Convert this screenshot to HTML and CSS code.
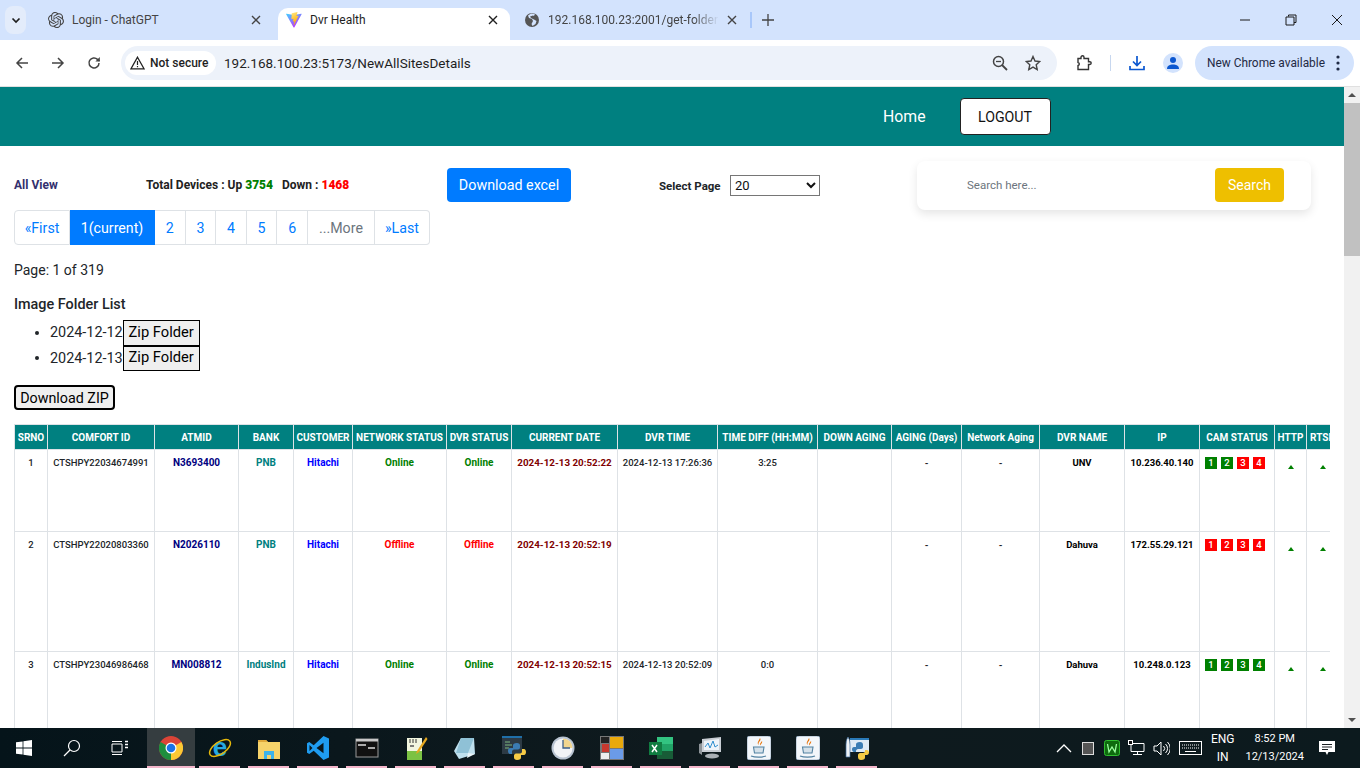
FILE: index.html
```html
<!DOCTYPE html>
<html lang="en">
<head>
    <meta charset="UTF-8">
    <title>Dvr Health</title>
    <link rel="stylesheet" href="styles.css">
</head>
<body>
    <!-- browser tabs -->
    <div class="tabstrip">
        <div class="tab-search"><svg width="12" height="12" viewBox="0 0 12 12"><path d="M2.5 4.5 6 8l3.500-3.500" fill="none" stroke="#1f1f1f" stroke-width="1.700"/></svg></div>
        <div class="tab tab-first">
            <svg class="favicon" viewBox="0 0 24 24"><path fill="#444" d="M22.2819 9.8211a5.9847 5.9847 0 0 0-.5157-4.9108 6.0462 6.0462 0 0 0-6.5098-2.9A6.0651 6.0651 0 0 0 4.9807 4.1818a5.9847 5.9847 0 0 0-3.9977 2.9 6.0462 6.0462 0 0 0 .7427 7.0966 5.98 5.98 0 0 0 .511 4.9107 6.051 6.051 0 0 0 6.5146 2.9001A5.9847 5.9847 0 0 0 13.2599 24a6.0557 6.0557 0 0 0 5.7718-4.2058 5.9894 5.9894 0 0 0 3.9977-2.9001 6.0557 6.0557 0 0 0-.7475-7.0729zm-9.022 12.6081a4.4755 4.4755 0 0 1-2.8764-1.0408l.1419-.0804 4.7783-2.7582a.7948.7948 0 0 0 .3927-.6813v-6.7369l2.02 1.1686a.071.071 0 0 1 .038.052v5.5826a4.504 4.504 0 0 1-4.4945 4.4944zm-9.6607-4.1254a4.4708 4.4708 0 0 1-.5346-3.0137l.142.0852 4.783 2.7582a.7712.7712 0 0 0 .7806 0l5.8428-3.3685v2.3324a.0804.0804 0 0 1-.0332.0615L9.74 19.9502a4.4992 4.4992 0 0 1-6.1408-1.6464zM2.3408 7.8956a4.485 4.485 0 0 1 2.3655-1.9728V11.6a.7664.7664 0 0 0 .3879.6765l5.8144 3.3543-2.0201 1.1685a.0757.0757 0 0 1-.071 0l-4.8303-2.7865A4.504 4.504 0 0 1 2.3408 7.872zm16.5963 3.8558L13.1038 8.364 15.1192 7.2a.0757.0757 0 0 1 .071 0l4.8303 2.7913a4.4944 4.4944 0 0 1-.6765 8.1042v-5.6772a.79.79 0 0 0-.407-.667zm2.0107-3.0231l-.142-.0852-4.7735-2.7818a.7759.7759 0 0 0-.7854 0L9.409 9.2297V6.8974a.0662.0662 0 0 1 .0284-.0615l4.8303-2.7866a4.4992 4.4992 0 0 1 6.6802 4.66zM8.3065 12.863l-2.02-1.1638a.0804.0804 0 0 1-.038-.0567V6.0742a4.4992 4.4992 0 0 1 7.3757-3.4537l-.142.0805L8.704 5.459a.7948.7948 0 0 0-.3927.6813zm1.0976-2.3654l2.602-1.4998 2.6069 1.4998v2.9994l-2.5974 1.4997-2.6067-1.4997Z"/></svg>
            <span class="tab-title">Login - ChatGPT</span>
            <svg class="tab-close" viewBox="0 0 10 10"><path d="M1 1l8 8M9 1l-8 8" stroke="#444" stroke-width="1.400"/></svg>
        </div>
        <div class="tab tab-active">
            <svg class="favicon" viewBox="0 0 16 16"><defs><linearGradient id="vb" x1="0" y1="0" x2="0.6" y2="1"><stop offset="0" stop-color="#41d1ff"/><stop offset="1" stop-color="#bd34fe"/></linearGradient><linearGradient id="vy" x1="0" y1="0" x2="0.3" y2="1"><stop offset="0" stop-color="#ffea83"/><stop offset="1" stop-color="#ffa800"/></linearGradient></defs><path fill="url(#vb)" d="M15.6 2.300 8.300 15.400c-.15.270-.53.270-.69 0L.14 2.300c-.17-.3.09-.66.42-.6L7.900 3a.4.4 0 0 0 .14 0l7.100-1.300c.34-.06.6.3.43.6z"/><path fill="url(#vy)" d="M11.300.1 5.900 1.160a.2.2 0 0 0-.16.18l-.33 5.600c-.01.13.11.230.24.200l1.500-.35c.14-.03.27.09.24.230l-.45 2.180c-.03.150.11.270.25.230l.93-.28c.14-.04.280.08.25.230l-.71 3.440c-.05.220.240.340.36.150l.08-.12 4.400-8.780c.07-.15-.05-.31-.21-.28l-1.550.3c-.15.03-.27-.11-.23-.25l1-3.490c.04-.15-.09-.28-.24-.25z"/></svg>
            <span class="tab-title">Dvr Health</span>
            <svg class="tab-close" viewBox="0 0 10 10"><path d="M1 1l8 8M9 1l-8 8" stroke="#1f1f1f" stroke-width="1.400"/></svg>
        </div>
        <div class="tab tab-third">
            <svg class="favicon" viewBox="0 0 16 16"><circle cx="8" cy="8" r="7" fill="#555"/><path fill="#d3e3fd" d="M7 1.500 4 3.500l1 2.500 3 1 1 2-1.500 3 1 2 3-2 1-3-2.500-1.500L7 6 6 4.500l3-1 1 .5 1-2.200z"/></svg>
            <span class="tab-title tab-fade">192.168.100.23:2001/get-folder</span>
            <svg class="tab-close" viewBox="0 0 10 10"><path d="M1 1l8 8M9 1l-8 8" stroke="#444" stroke-width="1.400"/></svg>
        </div>
        <div class="tab-sep"></div>
        <svg class="tab-new" viewBox="0 0 12 12"><path d="M6 0v12M0 6h12" stroke="#444" stroke-width="1.300"/></svg>
        <div class="window-btns">
            <svg viewBox="0 0 12 12"><path d="M1 6h10" stroke="#1a1a1a"/></svg>
            <svg viewBox="0 0 12 12"><path d="M3.500 2.500V1h7.500v7.500H9M1 3h8v8H1z" fill="none" stroke="#1a1a1a"/></svg>
            <svg viewBox="0 0 12 12"><path d="M1 1l10 10M11 1 1 11" stroke="#1a1a1a"/></svg>
        </div>
    </div>

    <!-- address bar -->
    <div class="toolbar">
        <svg class="nav-icon" viewBox="0 0 14 14"><path d="M13 7H2M7 2 2 7l5 5" fill="none" stroke="#444" stroke-width="1.500"/></svg>
        <svg class="nav-icon" viewBox="0 0 14 14"><path d="M1 7h11M7 2l5 5-5 5" fill="none" stroke="#444" stroke-width="1.500"/></svg>
        <svg class="nav-icon" viewBox="0 0 14 14"><path d="M12 7a5 5 0 1 1-1.500-3.600L12.500 5" fill="none" stroke="#444" stroke-width="1.500"/><path d="M12.800 1v4.400H8.400z" fill="#444"/></svg>
        <div class="omnibox">
            <div class="not-secure">
                <svg width="15" height="14" viewBox="0 0 15 14"><path d="M7.500 1.200 14 12.800H1z" fill="none" stroke="#222" stroke-width="1.300"/><path d="M7.500 5v4M7.500 10v1.300" stroke="#222" stroke-width="1.200"/></svg>
                <span>Not secure</span>
            </div>
            <span class="url">192.168.100.23:5173/NewAllSitesDetails</span>
            <svg class="omni-zoom" viewBox="0 0 16 16"><circle cx="6.500" cy="6.500" r="5" fill="none" stroke="#444" stroke-width="1.500"/><path d="M10 10l5 5" stroke="#444" stroke-width="1.800"/><path d="M4 6.500h5" stroke="#444" stroke-width="1.300"/></svg>
            <svg class="omni-star" viewBox="0 0 16 16"><path d="M8 1.500l2 4.500 4.800.5-3.600 3.200 1 4.800L8 12.100l-4.200 2.400 1-4.800L1.200 6.500 6 6z" fill="none" stroke="#444" stroke-width="1.400"/></svg>
        </div>
        <svg class="ext-icon" viewBox="0 0 16 16"><path d="M2 3.500h3V2.200a1.500 1.500 0 0 1 3 0v1.300h4.500v3.200h1.300a1.400 1.400 0 0 1 0 2.800h-1.300v5H2v-4a1.500 1.500 0 0 0 1.300-1.500A1.500 1.500 0 0 0 2 7.500z" fill="none" stroke="#333" stroke-width="1.400"/></svg>
        <div class="toolbar-sep"></div>
        <svg class="dl-icon" viewBox="0 0 16 16"><path d="M8 1v9M4 6.500 8 10.500l4-4M1 11v3.500h14V11" fill="none" stroke="#0b57d0" stroke-width="1.700"/></svg>
        <div class="profile"><svg width="14" height="14" viewBox="0 0 14 14"><circle cx="7" cy="4" r="3" fill="#0b57d0"/><path d="M1 13c0-3.500 3-4.500 6-4.500s6 1 6 4.500z" fill="#0b57d0"/></svg></div>
        <div class="update-pill">
            <span>New Chrome available</span>
            <svg width="4" height="16" viewBox="0 0 4 16"><circle cx="2" cy="2" r="1.600" fill="#1f2a44"/><circle cx="2" cy="8" r="1.600" fill="#1f2a44"/><circle cx="2" cy="14" r="1.600" fill="#1f2a44"/></svg>
        </div>
    </div>

    <div class="window-body">
        <div class="page">
            <nav class="topnav">
                <a class="home-link">Home</a>
                <button class="logout-btn">LOGOUT</button>
            </nav>

            <div class="summary-row">
                <span class="all-view">All View</span>
                <span class="totals">Total Devices : Up <b class="up">3754</b> &nbsp; Down : <b class="down">1468</b></span>
                <button class="excel-btn">Download excel</button>
                <label class="select-label">Select Page</label>
                <select class="page-select"><option>20</option></select>
                <div class="search-card">
                    <input class="search-input" placeholder="Search here...">
                    <button class="search-btn">Search</button>
                </div>
            </div>

            <ul class="pager">
                <li class="p-first">«First</li>
                <li class="p-current">1(current)</li>
                <li class="p-num">2</li>
                <li class="p-num">3</li>
                <li class="p-num">4</li>
                <li class="p-num">5</li>
                <li class="p-num">6</li>
                <li class="p-more">...More</li>
                <li class="p-last">»Last</li>
            </ul>

            <p class="page-count">Page: 1 of 319</p>
            <h4 class="folder-title">Image Folder List</h4>
            <ul class="folder-list">
                <li>2024-12-12<button class="zip-folder">Zip Folder</button></li>
                <li>2024-12-13<button class="zip-folder">Zip Folder</button></li>
            </ul>
            <button class="download-zip">Download ZIP</button>

            <div class="table-wrap">
                <table class="sites">
                    <colgroup>
                        <col class="c-sr"><col class="c-comfort"><col class="c-atm"><col class="c-bank"><col class="c-cust"><col class="c-net"><col class="c-dvr"><col class="c-date"><col class="c-time"><col class="c-diff"><col class="c-down"><col class="c-aging"><col class="c-netage"><col class="c-name"><col class="c-ip"><col class="c-cam"><col class="c-http"><col class="c-rtsp">
                    </colgroup>
                    <thead>
                        <tr><th>SRNO</th><th>COMFORT ID</th><th>ATMID</th><th>BANK</th><th>CUSTOMER</th><th>NETWORK STATUS</th><th>DVR STATUS</th><th>CURRENT DATE</th><th>DVR TIME</th><th>TIME DIFF (HH:MM)</th><th>DOWN AGING</th><th>AGING (Days)</th><th>Network Aging</th><th>DVR NAME</th><th>IP</th><th>CAM STATUS</th><th>HTTP</th><th>RTSP</th></tr>
                    </thead>
                    <tbody>
                        <tr class="row-a">
                            <td>1</td><td>CTSHPY22034674991</td><td class="atm">N3693400</td><td class="bank">PNB</td><td class="cust">Hitachi</td><td class="on">Online</td><td class="on">Online</td><td class="date">2024-12-13 20:52:22</td><td>2024-12-13 17:26:36</td><td>3:25</td><td></td><td class="dash">-</td><td class="dash">-</td><td class="strong">UNV</td><td class="strong">10.236.40.140</td>
                            <td class="cams"><span class="cam cam-on">1</span><span class="cam cam-on">2</span><span class="cam cam-off">3</span><span class="cam cam-off">4</span></td>
                            <td><i class="tri"></i></td><td><i class="tri"></i></td>
                        </tr>
                        <tr class="row-b">
                            <td>2</td><td>CTSHPY22020803360</td><td class="atm">N2026110</td><td class="bank">PNB</td><td class="cust">Hitachi</td><td class="off">Offline</td><td class="off">Offline</td><td class="date">2024-12-13 20:52:19</td><td></td><td></td><td></td><td class="dash">-</td><td class="dash">-</td><td class="strong">Dahuva</td><td class="strong">172.55.29.121</td>
                            <td class="cams"><span class="cam cam-off">1</span><span class="cam cam-off">2</span><span class="cam cam-off">3</span><span class="cam cam-off">4</span></td>
                            <td><i class="tri"></i></td><td><i class="tri"></i></td>
                        </tr>
                        <tr class="row-b">
                            <td>3</td><td>CTSHPY23046986468</td><td class="atm">MN008812</td><td class="bank">IndusInd</td><td class="cust">Hitachi</td><td class="on">Online</td><td class="on">Online</td><td class="date">2024-12-13 20:52:15</td><td>2024-12-13 20:52:09</td><td>0:0</td><td></td><td class="dash">-</td><td class="dash">-</td><td class="strong">Dahuva</td><td class="strong">10.248.0.123</td>
                            <td class="cams"><span class="cam cam-on">1</span><span class="cam cam-on">2</span><span class="cam cam-on">3</span><span class="cam cam-on">4</span></td>
                            <td><i class="tri"></i></td><td><i class="tri"></i></td>
                        </tr>
                    </tbody>
                </table>
            </div>
        </div>
        <div class="scrollbar">
            <svg class="sb-arrow" viewBox="0 0 16 16"><path d="M4 10l4-4 4 4z" fill="#505050"/></svg>
            <div class="sb-thumb"></div>
            <div class="sb-track"></div>
            <svg class="sb-arrow" viewBox="0 0 16 16"><path d="M4 6l4 4 4-4z" fill="#505050"/></svg>
        </div>
    </div>

    <!-- windows taskbar -->
    <div class="taskbar">
        <div class="task-plain"><svg width="16" height="16" viewBox="0 0 16 16"><path fill="#fff" d="M0 2.300 6.600 1.400v6.200H0zM7.400 1.300 16 0v7.600H7.400zM0 8.400h6.600v6.200L0 13.700zM7.400 8.400H16V16l-8.600-1.300z"/></svg></div>
        <div class="task-plain"><svg width="18" height="18" viewBox="0 0 18 18"><circle cx="11" cy="7" r="5.500" fill="none" stroke="#fff" stroke-width="1.200"/><path d="M7 11l-6 6" stroke="#fff" stroke-width="1.300"/></svg></div>
        <div class="task-plain"><svg width="18" height="16" viewBox="0 0 18 16"><path d="M1 4h10v8H1zM1 1.500h10M1 14.500h10" fill="none" stroke="#fff"/><path d="M14 1.500h3M14 4.500h3M14 7.500h3" stroke="#fff" stroke-width="1.500"/></svg></div>
        <div class="task-item task-active"><svg viewBox="0 0 24 24"><circle cx="12" cy="12" r="12" fill="#db4437"/><path d="M12 12 22.400 6A12 12 0 0 1 12 24z" fill="#fcc934"/><path d="M12 12 12 24A12 12 0 0 1 1.600 6z" fill="#1e8e3e"/><circle cx="12" cy="12" r="5.500" fill="#fff"/><circle cx="12" cy="12" r="4.300" fill="#1a73e8"/></svg></div>
        <div class="task-item"><svg viewBox="0 0 24 24"><text x="12" y="20" text-anchor="middle" class="ie-letter">e</text><ellipse cx="12" cy="12" rx="12" ry="6" transform="rotate(-35 12 12)" fill="none" stroke="#e5b80b" stroke-width="1.500"/></svg></div>
        <div class="task-item"><svg viewBox="0 0 24 24"><path d="M1 4h8l2 2h12v17H1z" fill="#f6d36a"/><path d="M1 4h8l2 2H1z" fill="#e0a93a"/><path d="M7 15h10v8h-3v-4h-4v4H7z" fill="#3db3ea"/></svg></div>
        <div class="task-item"><svg viewBox="0 0 24 24"><path d="M17.500 0 7.700 9.300 3.300 6 1 7.200v9.600L3.300 18l4.400-3.300 9.800 9.300L23 21.500v-19zM17.500 6.700v10.600L10.500 12zM3.500 9l3 3-3 3z" fill="#1f9cf0"/></svg></div>
        <div class="task-item"><svg viewBox="0 0 24 20"><rect x="1" y="1" width="22" height="18" fill="#111" stroke="#9a9a9a"/><rect x="1" y="1" width="22" height="2.500" fill="#c8c8c8"/><path d="M3 7h8M13 10h7" stroke="#ddd" stroke-width="1.300"/></svg></div>
        <div class="task-item"><svg viewBox="0 0 24 24"><path d="M3 2h15v22H3z" fill="#f2f6df"/><path d="M3 15h15v9H3z" fill="#7cc243"/><path d="M6 3v4M9 3v4M12 3v4" stroke="#333"/><path d="M6 10h4" stroke="#555" stroke-width="1.500"/><path d="M22 1 13 15l-1 3 3-2L23.500 3z" fill="#e7a820"/></svg></div>
        <div class="task-item"><svg viewBox="0 0 24 24"><path d="M8 2h13l1 16-16 5L1 15z" fill="#bfe0ee"/><path d="M8 2h13l-6 15H3z" fill="#8fc1d6"/><path d="M15 17l7 1-8 4z" fill="#e9f4f8"/></svg></div>
        <div class="task-item"><svg viewBox="0 0 24 24"><rect x="0" y="0" width="20" height="18" fill="#2d3a44"/><rect width="20" height="2" fill="#1f6fa8"/><path d="M3 6h5M3 9h7M3 12h4" stroke="#7fb77f"/><path d="M15 7c-3 0-4 1-4 2.500V12H8c-1.500 0-2 1.500-2 3s.7 3 2 3h2v-2.500c0-1 1-2 2-2h4c1 0 2-1 2-2v-2C18 8 17 7 15 7z" fill="#3b7cb4"/><path d="M15 24c3 0 4-1 4-2.500V19h3c1.500 0 2-1.500 2-3s-.7-3-2-3h-2v2.500c0 1-1 2-2 2h-4c-1 0-2 1-2 2v2c0 1.500 1 2.500 3 2.500z" fill="#f6cb45"/></svg></div>
        <div class="task-item"><svg viewBox="0 0 24 24"><circle cx="12" cy="12" r="11.500" fill="#b9c4d2"/><circle cx="12" cy="12" r="9.500" fill="#f2f4f7"/><path d="M12 2.500A9.500 9.500 0 0 1 21.500 12H12z" fill="#f1d690"/><path d="M12 4v8h7" fill="none" stroke="#3a5f8c" stroke-width="1.300"/></svg></div>
        <div class="task-item"><svg viewBox="0 0 24 24"><rect width="24" height="24" fill="#777"/><rect x="1" y="1" width="8" height="6" fill="#222"/><rect x="10" y="1" width="13" height="11" fill="#e9a90c"/><rect x="2" y="8" width="7" height="8" fill="#c8382e"/><rect x="10" y="13" width="13" height="10" fill="#6b9be8"/><rect x="1" y="17" width="8" height="6" fill="#eee"/></svg></div>
        <div class="task-item"><svg viewBox="0 0 24 24"><rect x="8" y="1" width="16" height="22" fill="#21a366"/><rect x="8" y="1" width="16" height="7" fill="#33c481"/><rect x="8" y="15" width="16" height="8" fill="#185c37"/><rect x="0" y="6" width="13" height="13" fill="#107c41"/><path d="M3 9l5 7M8 9l-5 7" stroke="#fff" stroke-width="1.500"/></svg></div>
        <div class="task-item"><svg viewBox="0 0 24 24"><path d="M4 3l19-2v15L4 16z" fill="#c9ced4"/><path d="M6 5l15-2v11L6 14z" fill="#eef4fa"/><path d="M7 11l3-4 2 5 3-7 2 6 3-2" fill="none" stroke="#2d8ecf"/><path d="M1 8l3-1v12l-3-2z" fill="#8e9499"/><ellipse cx="14" cy="20" rx="7" ry="2.500" fill="#aab0b5"/></svg></div>
        <div class="task-item"><svg viewBox="0 0 24 24"><rect width="24" height="24" rx="3" fill="#f3f6fa" stroke="#9fb3c8"/><path d="M13 2c2 3-3 4-1 7-3-2 0-4 1-7z" fill="#e76f00"/><path d="M15 5c1 2-2 3-1 4.500-2-1.500 0-3 1-4.500z" fill="#e76f00"/><path d="M6.500 11h10.500l-1 6H7.500z" fill="#d5e1ea" stroke="#5382a1" stroke-width="1.100"/><path d="M4 20c4 1.500 11 1.500 15 0" fill="none" stroke="#5382a1" stroke-width="1.300"/></svg></div>
        <div class="task-item"><svg viewBox="0 0 24 24"><rect width="24" height="24" rx="3" fill="#f3f6fa" stroke="#9fb3c8"/><path d="M13 2c2 3-3 4-1 7-3-2 0-4 1-7z" fill="#e76f00"/><path d="M15 5c1 2-2 3-1 4.500-2-1.500 0-3 1-4.500z" fill="#e76f00"/><path d="M6.500 11h10.500l-1 6H7.500z" fill="#d5e1ea" stroke="#5382a1" stroke-width="1.100"/><path d="M4 20c4 1.500 11 1.500 15 0" fill="none" stroke="#5382a1" stroke-width="1.300"/></svg></div>
        <div class="task-item"><svg viewBox="0 0 24 24"><rect x="5" y="2" width="19" height="14" fill="#dfeaf5"/><rect x="5" y="2" width="19" height="2" fill="#2a7ab8"/><path d="M3 1c2 3 2 6 2 10v10H1V11C1 7 1 4 3 1z" fill="#eef2f6" stroke="#3f6f9f" stroke-width=".7"/><path d="M15 6c-3 0-4 1-4 2.500V11H9c-1.500 0-2 1-2 2.500S8 16 9 16h2v-1c0-1 1-2 2-2h3c1 0 2-1 2-2V9c0-2-1-3-3-3z" fill="#3b7cb4"/><path d="M16 24c3 0 4-1 4-2.500V19h2c1 0 2-1 2-2.500S23 14 22 14h-2v1c0 1-1 2-2 2h-3c-1 0-2 1-2 2v2c0 2 1 3 3 3z" fill="#f6cb45"/></svg></div>
        <div class="tray">
            <svg width="16" height="9" viewBox="0 0 16 9"><path d="M1 8l7-7 7 7" fill="none" stroke="#fff" stroke-width="1.300"/></svg>
            <div class="tray-grid"></div>
            <svg class="tray-wd" width="16" height="16" viewBox="0 0 16 16"><rect x=".5" y=".5" width="15" height="15" rx="2" fill="#0e6b0e" stroke="#2fbf2f"/><path d="M3.500 4l1.500 8 3-5 3 5 1.500-8" fill="none" stroke="#9dffa0" stroke-width="1.300"/></svg>
            <svg width="17" height="16" viewBox="0 0 17 16"><path d="M3 3.500h13v8H3zM9.500 11.500v3M5 14.500h9" fill="none" stroke="#fff"/><rect x=".5" y=".5" width="4" height="4" fill="#111" stroke="#fff"/></svg>
            <svg width="17" height="15" viewBox="0 0 17 15"><path d="M1 5h3l4-4v13l-4-4H1z" fill="none" stroke="#fff"/><path d="M10.500 5a3.500 3.500 0 0 1 0 5M12.500 3a6 6 0 0 1 0 9M14.500 1a9 9 0 0 1 0 13" fill="none" stroke="#fff"/></svg>
            <svg class="tray-kbd" width="23" height="14" viewBox="0 0 23 14"><rect x=".5" y=".5" width="22" height="13" fill="none" stroke="#fff"/><path d="M3 4h17M3 7h17" stroke="#fff" stroke-dasharray="1 1"/><path d="M6 10.500h11" stroke="#fff"/></svg>
            <div class="tray-lang"><span>ENG</span><span>IN</span></div>
            <div class="tray-clock"><span>8:52 PM</span><span>12/13/2024</span></div>
            <svg class="tray-note" width="16" height="16" viewBox="0 0 16 16"><path d="M0 1h16v11H9.500L8 15l-1.500-3H0z" fill="#fff"/><path d="M3 4.500h10M3 7h10M3 9.500h6" stroke="#1a1f22"/></svg>
        </div>
    </div>
</body>
</html>
```

FILE: styles.css
```css
* {
    box-sizing: border-box;
}

html, body {
    margin: 0;
    height: 100%;
    overflow: hidden;
}

body {
    display: flex;
    flex-direction: column;
    height: 768px;
    font-family: Roboto, "Noto Sans", sans-serif;
    color: #212529;
    background-color: #fff;
}

/* browser chrome */
.tabstrip {
    display: flex;
    align-items: flex-end;
    height: 40px;
    flex-shrink: 0;
    background-color: #d3e3fd;
    padding-left: 5px;
    font-size: 12px;
}

.tab-search {
    width: 21px;
    height: 28px;
    margin-bottom: 6px;
    border-radius: 8px;
    background-color: #e3ecfb;
    display: flex;
    align-items: center;
    justify-content: center;
}

.tab {
    height: 32px;
    display: flex;
    align-items: center;
    padding-bottom: 8px;
    color: #444;
    flex-shrink: 0;
}

.tab-first {
    width: 252px;
    padding-left: 22px;
}

.tab-first .tab-close {
    margin-right: 17px;
}

.tab-active {
    width: 232px;
    padding-left: 8px;
    margin-right: 14px;
    background-color: #fff;
    border-radius: 10px 10px 0 0;
    color: #1f1f1f;
}

.tab-third {
    width: 225px;
}

.favicon {
    width: 16px;
    height: 16px;
    margin-right: 8px;
    flex-shrink: 0;
}

.tab-title {
    flex: 1;
    white-space: nowrap;
    overflow: hidden;
}

.tab-fade {
    -webkit-mask-image: linear-gradient(to right, #000 85%, transparent);
    mask-image: linear-gradient(to right, #000 85%, transparent);
}

.tab-close {
    width: 10px;
    height: 10px;
    margin: 0 12px 0 8px;
    flex-shrink: 0;
}

.tab-sep {
    width: 2px;
    height: 16px;
    margin: 0 0 12px 1px;
    background-color: #a8c7fa;
}

.tab-new {
    width: 12px;
    height: 12px;
    margin: 0 0 14px 10px;
}

.window-btns {
    margin-left: auto;
    display: flex;
    gap: 34px;
    padding-right: 17px;
    margin-bottom: 14px;
}

.window-btns svg {
    width: 12px;
    height: 12px;
}

.toolbar {
    height: 47px;
    flex-shrink: 0;
    display: flex;
    align-items: center;
    padding: 0 6px 1px 15px;
    background-color: #fff;
    border-radius: 10px 10px 0 0;
    border-bottom: 1px solid #e0e0e0;
    position: relative;
}

.nav-icon {
    width: 14px;
    height: 14px;
    margin-right: 22px;
    flex-shrink: 0;
}

.omnibox {
    width: 936px;
    height: 34px;
    margin-left: -2px;
    border-radius: 17px;
    background-color: #edf2fa;
    display: flex;
    align-items: center;
    padding-left: 4px;
    flex-shrink: 0;
}

.not-secure {
    width: 91px;
    height: 24px;
    border-radius: 12px;
    background-color: #fff;
    display: flex;
    align-items: center;
    gap: 5px;
    padding-left: 5px;
    font-size: 12px;
    font-weight: 500;
    color: #1f1f1f;
}

.url {
    margin-left: 8px;
    font-size: 13.5px;
    color: #1f1f1f;
}

.omni-zoom {
    width: 16px;
    height: 16px;
    margin-left: auto;
}

.omni-star {
    width: 16px;
    height: 16px;
    margin: 0 16px 0 17px;
}

.ext-icon {
    width: 16px;
    height: 16px;
    margin-left: 19px;
}

.toolbar-sep {
    width: 1px;
    height: 16px;
    margin-left: 18px;
    background-color: #c7d7ef;
}

.dl-icon {
    width: 16px;
    height: 16px;
    margin-left: 18px;
}

.profile {
    width: 20px;
    height: 20px;
    margin-left: 18px;
    border-radius: 50%;
    background-color: #d3e3fd;
    display: flex;
    align-items: center;
    justify-content: center;
}

.update-pill {
    width: 159px;
    height: 34px;
    margin-left: 12px;
    border-radius: 17px;
    background-color: #d3e3fd;
    display: flex;
    align-items: center;
    justify-content: space-between;
    padding: 0 14px 0 12px;
    font-size: 11.9px;
    color: #1f2a44;
}

/* page area */
.window-body {
    flex: 1;
    min-height: 0;
    display: flex;
}

.page {
    flex: 1;
    min-width: 0;
    overflow: hidden;
}

.scrollbar {
    width: 16px;
    flex-shrink: 0;
    display: flex;
    flex-direction: column;
    background-color: #f1f1f1;
}

.sb-arrow {
    width: 16px;
    height: 16px;
    flex-shrink: 0;
}

.sb-thumb {
    height: 153px;
    background-color: #c1c1c1;
}

.sb-track {
    flex: 1;
}

.topnav {
    height: 59px;
    background-color: #008080;
    display: flex;
    align-items: center;
    padding-left: 883px;
}

.home-link {
    color: #fff;
    font-size: 15.8px;
}

.logout-btn {
    width: 91px;
    height: 37px;
    margin-left: 34px;
    background-color: #fff;
    color: #111;
    border: 1px solid #222;
    border-radius: 4px;
    font-family: inherit;
    font-size: 14.2px;
}

.summary-row {
    height: 49px;
    margin-top: 15px;
    display: flex;
    align-items: center;
    padding-left: 14px;
    font-size: 12px;
    font-weight: 700;
}

.all-view {
    width: 132px;
    padding-bottom: 2px;
    color: #33306e;
}

.totals {
    width: 301px;
    padding-bottom: 2px;
    color: #222;
}

.up {
    color: green;
}

.down {
    color: red;
}

.excel-btn {
    width: 124px;
    height: 34px;
    margin-bottom: 2px;
    background-color: #007bff;
    color: #fff;
    border: none;
    border-radius: 4px;
    font-family: inherit;
    font-size: 14.3px;
}

.select-label {
    margin-left: 88px;
    width: 71px;
    font-size: 11.5px;
}

.page-select {
    width: 90px;
    height: 21px;
    font-family: inherit;
    font-size: 13px;
    background-color: #fff;
    color: #111;
}

.search-card {
    width: 394px;
    height: 49px;
    margin-left: 97px;
    display: flex;
    align-items: center;
    justify-content: space-between;
    padding: 0 27px 2px 50px;
    background-color: #fff;
    border-radius: 8px;
    box-shadow: 0 4px 10px rgba(0, 0, 0, 0.1);
}

.search-input {
    border: none;
    outline: none;
    width: 200px;
    padding: 0;
    font-family: inherit;
    font-size: 11.5px;
}

.search-input::placeholder {
    color: #6c757d;
}

.search-btn {
    width: 69px;
    height: 34px;
    background-color: #eebf00;
    color: #fff;
    border: none;
    border-radius: 4px;
    font-family: inherit;
    font-size: 14px;
}

.pager {
    list-style: none;
    display: flex;
    width: 416px;
    height: 35px;
    margin: 0 0 0 14px;
    padding: 0;
    font-size: 14.2px;
    color: #007bff;
}

.pager li {
    display: flex;
    align-items: center;
    justify-content: center;
    border: 1px solid #dee2e6;
    border-left: none;
}

.p-first {
    width: 56px;
    border-left: 1px solid #dee2e6 !important;
    border-radius: 4px 0 0 4px;
}

.pager .p-current {
    width: 85px;
    background-color: #007bff;
    border-color: #007bff;
    color: #fff;
}

.p-num {
    flex: 1;
}

.p-more {
    width: 67px;
    color: #6c757d;
}

.p-last {
    width: 55px;
    border-radius: 0 4px 4px 0;
}

.page-count {
    margin: 14px 0 0 14px;
    font-size: 14px;
    line-height: 22px;
}

.folder-title {
    margin: 13px 0 0 14px;
    font-size: 14.4px;
    line-height: 22px;
    font-weight: 500;
}

.folder-list {
    margin: 4px 0 0;
    padding-left: 50px;
    font-size: 14.4px;
}

.folder-list li {
    height: 25.5px;
}

.zip-folder {
    height: 25.5px;
    width: 77px;
    padding: 0 0 2px;
    background-color: #efefef;
    border: 1px solid #000;
    border-radius: 0;
    font-family: inherit;
    font-size: 14.7px;
    color: #000;
    vertical-align: middle;
}

.download-zip {
    display: block;
    width: 101px;
    height: 25px;
    margin: 14px 0 0 14px;
    padding: 0;
    background-color: #efefef;
    border: 2px solid #000;
    border-radius: 4px;
    font-family: inherit;
    font-size: 14.3px;
    color: #000;
}

/* table */
.table-wrap {
    width: 1316px;
    margin: 14px 0 0 14px;
    overflow: hidden;
}

.sites {
    table-layout: fixed;
    border-collapse: collapse;
    width: 1324px;
    font-size: 9.5px;
    text-align: center;
    color: #212529;
}

.c-sr { width: 33px; }
.c-comfort { width: 107px; }
.c-atm { width: 84px; }
.c-bank { width: 55px; }
.c-cust { width: 59px; }
.c-net { width: 94px; }
.c-dvr { width: 65px; }
.c-date { width: 106px; }
.c-time { width: 100px; }
.c-diff { width: 100px; }
.c-down { width: 74px; }
.c-aging { width: 70px; }
.c-netage { width: 78px; }
.c-name { width: 85px; }
.c-ip { width: 75px; }
.c-cam { width: 75px; }
.c-http { width: 32px; }
.c-rtsp { width: 32px; }

.sites th, .sites td {
    border: 1px solid #dee2e6;
    padding: 0;
    overflow: hidden;
    white-space: nowrap;
}

.sites th {
    height: 25px;
    background-color: #008080;
    color: #fff;
    font-size: 10px;
    font-weight: 700;
}

.sites td {
    vertical-align: top;
    padding-top: 6px;
    line-height: 13px;
    font-weight: 500;
}

.row-a {
    height: 82px;
}

.row-b {
    height: 120px;
}

.sites .atm { color: navy; font-size: 10px; font-weight: 700; }
.sites .bank { color: #008080; font-size: 10px; font-weight: 700; }
.sites .cust { color: blue; font-size: 10px; font-weight: 700; }
.sites .on { color: green; font-size: 10px; font-weight: 700; }
.sites .off { color: red; font-size: 10px; font-weight: 700; }
.sites .date { color: maroon; font-size: 9.8px; font-weight: 700; }
.sites .strong { color: #000; font-weight: 700; }
.sites .dash { font-weight: 700; }

.sites .cams {
    text-align: left;
    padding-left: 5px;
}

.cam {
    display: inline-block;
    width: 12px;
    height: 12px;
    margin-right: 4px;
    color: #fff;
    text-align: center;
    line-height: 12px;
}

.cam-on { background-color: green; }
.cam-off { background-color: red; }

.tri {
    display: inline-block;
    margin-top: 9px;
    border-left: 3px solid transparent;
    border-right: 3px solid transparent;
    border-bottom: 4px solid green;
}

/* taskbar */
.taskbar {
    height: 40px;
    flex-shrink: 0;
    display: flex;
    align-items: stretch;
    background: linear-gradient(to right, #05141a, #0f1a1e 50%, #0c1a1e);
    color: #fff;
}

.task-plain {
    width: 48px;
    display: flex;
    align-items: center;
    justify-content: center;
    flex-shrink: 0;
}

.task-item {
    width: 41px;
    margin: 0 4px;
    display: flex;
    align-items: center;
    justify-content: center;
    flex-shrink: 0;
    border-bottom: 2px solid #f4b6cb;
    padding-top: 2px;
}

.task-item svg {
    width: 24px;
    height: 24px;
}

.task-active {
    width: 48px;
    margin: 0 0 0 3px;
    background-color: #353d40;
}

.ie-letter {
    font-family: "Liberation Sans", sans-serif;
    font-size: 26px;
    font-weight: 700;
    fill: #26a9e0;
}

.tray {
    margin-left: auto;
    display: flex;
    align-items: center;
    gap: 8px;
    padding-right: 25px;
    font-size: 12px;
}

.tray-grid {
    width: 12px;
    height: 13px;
    margin-left: 2px;
    border: 1px solid #ddd;
    background-color: #555;
}

.tray-wd {
    margin-left: 2px;
}

.tray-kbd {
    margin-left: 1px;
}

.tray-lang, .tray-clock {
    display: flex;
    flex-direction: column;
    align-items: center;
    line-height: 18px;
}

.tray-lang {
    margin-left: 1px;
}

.tray-clock {
    margin-left: 3px;
    font-size: 11px;
}

.tray-note {
    margin-left: 7px;
}
```
